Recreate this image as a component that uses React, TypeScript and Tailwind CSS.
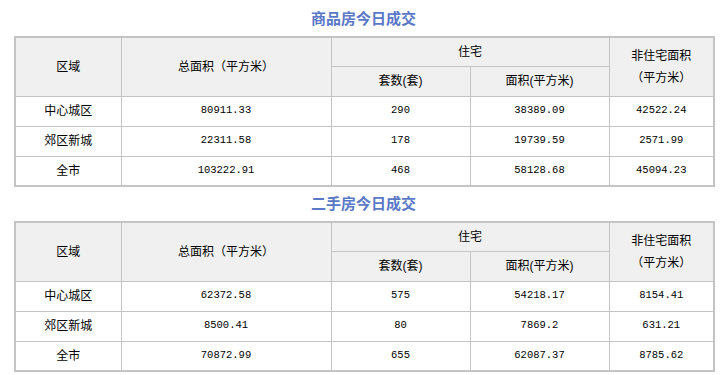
import React from "react";

interface Row {
  area: string;
  total: string;
  units: string;
  resArea: string;
  nonRes: string;
}

const newHomes: Row[] = [
  { area: "中心城区", total: "80911.33", units: "290", resArea: "38389.09", nonRes: "42522.24" },
  { area: "郊区新城", total: "22311.58", units: "178", resArea: "19739.59", nonRes: "2571.99" },
  { area: "全市", total: "103222.91", units: "468", resArea: "58128.68", nonRes: "45094.23" },
];

const resale: Row[] = [
  { area: "中心城区", total: "62372.58", units: "575", resArea: "54218.17", nonRes: "8154.41" },
  { area: "郊区新城", total: "8500.41", units: "80", resArea: "7869.2", nonRes: "631.21" },
  { area: "全市", total: "70872.99", units: "655", resArea: "62087.37", nonRes: "8785.62" },
];

const cell = "border border-[#c4c4c4] text-center align-middle p-0";
const num = cell + " font-['Liberation_Mono',monospace] text-[10.5px]";
const head = "border border-[#c4c4c4] text-center align-middle p-0 bg-[#f0f0f0] font-normal";

const DealTable: React.FC<{ title: string; rows: Row[]; first?: boolean }> = ({ title, rows, first }) => {
  return (
    <div className="flex flex-col">
      <div
        className={
          (first ? "h-[36px] pt-[2px] " : "h-[34px] ") +
          "flex items-center justify-center text-[15px] font-bold text-[#5a78c8]"
        }
      >
        {title}
      </div>
      <table className="w-[699px] mx-[14px] border-collapse border-2 border-[#c4c4c4] table-fixed text-[12px] text-black">
        <colgroup>
          <col className="w-[106px]" />
          <col className="w-[210px]" />
          <col className="w-[139px]" />
          <col className="w-[139px]" />
          <col className="w-[105px]" />
        </colgroup>
        <thead>
          <tr className="h-[29px]">
            <th rowSpan={2} className={head}>区域</th>
            <th rowSpan={2} className={head}>总面积（平方米）</th>
            <th colSpan={2} className={head}>住宅</th>
            <th rowSpan={2} className={head + " leading-[22px]"}>
              非住宅面积
              <br />
              （平方米）
            </th>
          </tr>
          <tr className="h-[30px]">
            <th className={head}>套数(套)</th>
            <th className={head}>面积(平方米)</th>
          </tr>
        </thead>
        <tbody>
          {rows.map((r) => (
            <tr key={r.area} className="h-[30px]">
              <td className={cell}>{r.area}</td>
              <td className={num}>{r.total}</td>
              <td className={num}>{r.units}</td>
              <td className={num}>{r.resArea}</td>
              <td className={num}>{r.nonRes}</td>
            </tr>
          ))}
        </tbody>
      </table>
    </div>
  );
};

export default function App() {
  return (
    <div
      className="w-[727px] h-[375px] bg-white overflow-hidden"
      style={{ fontFamily: '"Liberation Sans", "Noto Sans CJK SC", sans-serif' }}
    >
      <DealTable title="商品房今日成交" rows={newHomes} first />
      <DealTable title="二手房今日成交" rows={resale} />
    </div>
  );
}
